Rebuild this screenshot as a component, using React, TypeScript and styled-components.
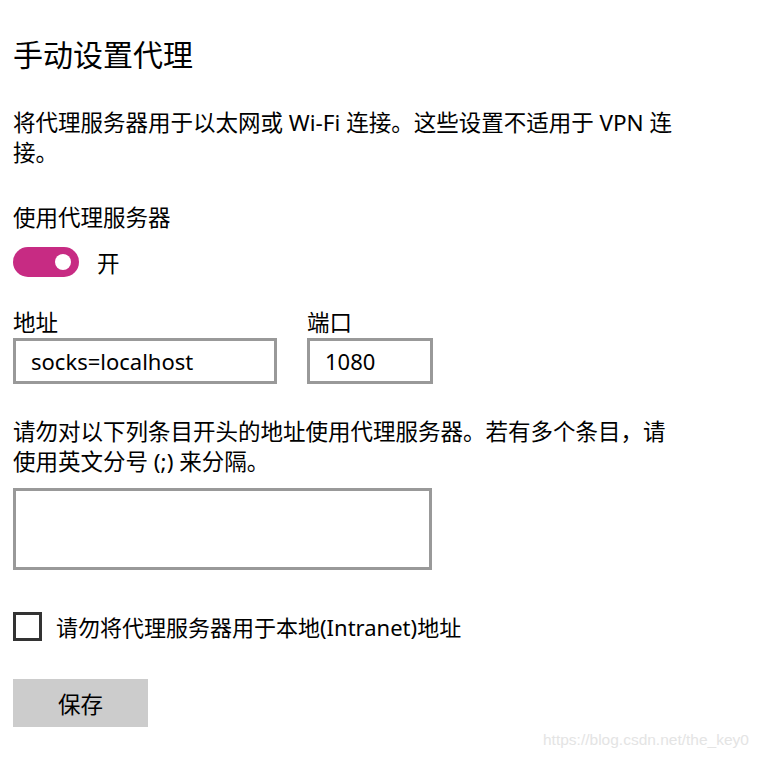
import styled, { createGlobalStyle } from 'styled-components';

const GlobalStyle = createGlobalStyle`
  html, body {
    margin: 0;
    padding: 0;
    background: #ffffff;
  }
  body {
    font-family: "Noto Sans", "Noto Sans CJK SC", sans-serif;
    color: #000000;
  }
`;

const Page = styled.div`
  position: relative;
  width: 761px;
  height: 757px;
  padding: 35px 0 0 13px;
  box-sizing: border-box;
  overflow: hidden;
`;

const Title = styled.h1`
  margin: 0;
  font-size: 30px;
  line-height: 40px;
  font-weight: 400;
`;

const Text = styled.p<{ $top: number; $width: number }>`
  margin: ${(p) => p.$top}px 0 0;
  max-width: ${(p) => p.$width}px;
  font-size: 22.5px;
  line-height: 30px;
`;

const Label = styled.div<{ $top?: number }>`
  margin-top: ${(p) => p.$top ?? 0}px;
  font-size: 22.5px;
  line-height: 30px;
`;

const ToggleRow = styled.div`
  display: flex;
  align-items: center;
  gap: 18px;
  margin-top: 14px;
  height: 30px;
  font-size: 22.5px;
`;

const Switch = styled.div`
  position: relative;
  width: 66px;
  height: 30px;
  border-radius: 15px;
  background: #c72b83;
`;

const Knob = styled.span`
  position: absolute;
  right: 8px;
  top: 7px;
  width: 16px;
  height: 16px;
  border-radius: 50%;
  background: #ffffff;
`;

const Fields = styled.div`
  display: flex;
  gap: 30px;
  margin-top: 31px;
`;

const Field = styled.div`
  display: flex;
  flex-direction: column;
`;

const Input = styled.div<{ $width: number }>`
  width: ${(p) => p.$width}px;
  height: 46px;
  box-sizing: border-box;
  border: 3px solid #999999;
  padding: 0 15px;
  display: flex;
  align-items: center;
  font-size: 22px;
`;

const TextArea = styled.div`
  margin-top: 11px;
  width: 419px;
  height: 82px;
  box-sizing: border-box;
  border: 3px solid #999999;
`;

const CheckRow = styled.div`
  display: flex;
  align-items: center;
  gap: 14px;
  margin-top: 41px;
  height: 30px;
  font-size: 22px;
`;

const Box = styled.span`
  width: 29px;
  height: 29px;
  box-sizing: border-box;
  border: 3px solid #333333;
`;

const Button = styled.button`
  display: block;
  margin-top: 38px;
  width: 135px;
  height: 48px;
  border: none;
  background: #cccccc;
  font-family: inherit;
  font-size: 22.5px;
  color: #000000;
  padding: 0;
`;

const Watermark = styled.div`
  position: absolute;
  left: 543px;
  top: 730px;
  font-family: "Liberation Sans", sans-serif;
  font-size: 15.5px;
  line-height: 20px;
  color: #e4e4e4;
`;

export default function App() {
  return (
    <>
      <GlobalStyle />
      <Page>
        <Title>手动设置代理</Title>
        <Text $top={33} $width={668}>
          将代理服务器用于以太网或 Wi-Fi 连接。这些设置不适用于 VPN 连接。
        </Text>
        <Label $top={35}>使用代理服务器</Label>
        <ToggleRow>
          <Switch>
            <Knob />
          </Switch>
          开
        </ToggleRow>
        <Fields>
          <Field>
            <Label>地址</Label>
            <Input $width={264}>socks=localhost</Input>
          </Field>
          <Field>
            <Label>端口</Label>
            <Input $width={126}>1080</Input>
          </Field>
        </Fields>
        <Text $top={33} $width={668}>
          请勿对以下列条目开头的地址使用代理服务器。若有多个条目，请使用英文分号 (;) 来分隔。
        </Text>
        <TextArea />
        <CheckRow>
          <Box />
          请勿将代理服务器用于本地(Intranet)地址
        </CheckRow>
        <Button>保存</Button>
        <Watermark>https://blog.csdn.net/the_key0</Watermark>
      </Page>
    </>
  );
}
